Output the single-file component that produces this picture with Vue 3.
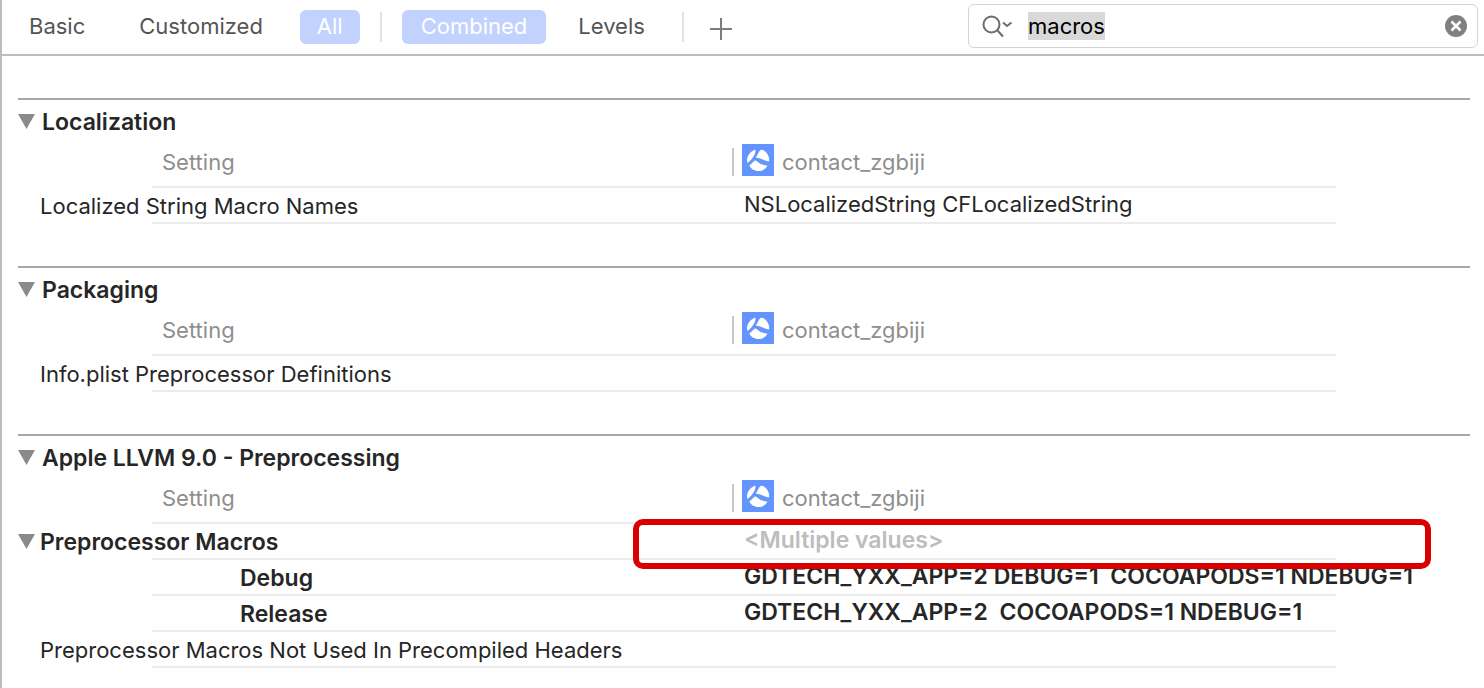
<script setup>
import { onMounted, ref } from 'vue'

const query = ref('macros')
const searchBox = ref(null)
const scope = ref('All')
const view = ref('Combined')

const sections = ref([
  {
    title: 'Localization',
    rows: [
      { label: 'Localized String Macro Names', value: 'NSLocalizedString CFLocalizedString' },
    ],
  },
  {
    title: 'Packaging',
    rows: [{ label: 'Info.plist Preprocessor Definitions', value: '' }],
  },
  {
    title: 'Apple LLVM 9.0 - Preprocessing',
    rows: [
      { label: 'Preprocessor Macros', value: '<Multiple values>', kind: 'group' },
      { label: 'Debug', value: 'GDTECH_YXX_APP=2 DEBUG=1  COCOAPODS=1 NDEBUG=1', kind: 'child' },
      { label: 'Release', value: 'GDTECH_YXX_APP=2  COCOAPODS=1 NDEBUG=1', kind: 'child' },
      { label: 'Preprocessor Macros Not Used In Precompiled Headers', value: '' },
    ],
  },
])

onMounted(() => {
  searchBox.value.focus()
  searchBox.value.select()
})
</script>

<template>
  <div class="settings">
    <header class="toolbar">
      <nav class="filters">
        <button
          v-for="name in ['Basic', 'Customized', 'All']"
          :key="name"
          type="button"
          class="filter"
          :class="{ active: scope === name }"
          @click="scope = name"
        >{{ name }}</button>
      </nav>
      <span class="divider"></span>
      <nav class="filters views">
        <button
          v-for="name in ['Combined', 'Levels']"
          :key="name"
          type="button"
          class="filter"
          :class="{ active: view === name }"
          @click="view = name"
        >{{ name }}</button>
      </nav>
      <span class="divider last"></span>
      <button type="button" class="add" aria-label="Add setting">
        <svg width="22" height="22" viewBox="0 0 22 22">
          <path d="M11 0V22M0 11H22" stroke="#7d7d7d" stroke-width="2" fill="none" />
        </svg>
      </button>
      <div class="search">
        <svg width="32" height="24" viewBox="0 0 32 24" aria-hidden="true">
          <g fill="none" stroke="#6c6c6c" stroke-width="2">
            <circle cx="9.500" cy="10.500" r="8" />
            <path d="M15 16L21 22.500" />
            <path d="M21 8.500L25 12L29.500 8.500" />
          </g>
        </svg>
        <input ref="searchBox" v-model="query" type="text" aria-label="Search settings" spellcheck="false" />
        <button type="button" class="clear" aria-label="Clear search" @click="query = ''">
          <svg width="22" height="22" viewBox="0 0 22 22">
            <circle cx="11" cy="11" r="11" fill="#808080" />
            <path d="M6.500 6.500L15.500 15.500M15.500 6.500L6.500 15.500" stroke="#fff" stroke-width="2.600" />
          </svg>
        </button>
      </div>
    </header>

    <main class="content">
      <section v-for="section in sections" :key="section.title" class="section">
        <h2 class="title">
          <button type="button" class="disclosure" :aria-label="'Toggle ' + section.title">
            <svg width="18" height="17" viewBox="0 0 18 17"><path d="M0 0H17L8.500 15Z" fill="#8a8a8a" /></svg>
          </button>
          {{ section.title }}
        </h2>
        <table>
          <thead>
            <tr>
              <th class="name" scope="col">Setting</th>
              <th class="target" scope="col">
                <div class="target-inner">
                  <span class="tick"></span>
                  <svg width="32" height="32" viewBox="0 0 32 32" aria-hidden="true">
                    <rect width="32" height="32" fill="#6495ff" />
                    <path d="M13.6 5.4C8.6 7 5 11.400 5 16.400C5 17.300 5.100 18 5.600 18.400C6 18.700 6.600 18.100 7.300 17.400C10.800 14 13.500 10.500 13.600 5.400Z" fill="#fff" />
                    <path d="M19 5.800C20 5.300 21.500 6 23 7.300C26 9.800 27.400 13.500 27.200 16.800C27 17.900 26 17.600 24.800 17.100C21 15.500 18 14.200 13.800 13.500C15.600 11.500 16.500 7.300 19 5.800Z" fill="#fff" />
                    <path d="M7.300 21.200C9.500 20.200 10.800 18 12.800 16.600C14 16 14.800 17 15.800 18C18.500 20.400 21.700 21.200 25.400 21.500C24.300 24.600 20.500 27 16.400 27C12.400 27 8.400 24.600 7.300 21.200Z" fill="#fff" />
                  </svg>
                  <span>contact_zgbiji</span>
                </div>
              </th>
            </tr>
          </thead>
          <tbody>
            <tr v-for="row in section.rows" :key="row.label" :class="row.kind">
              <th class="label" scope="row">
                <button v-if="row.kind === 'group'" type="button" class="disclosure" :aria-label="'Toggle ' + row.label">
                  <svg width="18" height="17" viewBox="0 0 18 17"><path d="M0 0H17L8.500 15Z" fill="#8a8a8a" /></svg>
                </button>
                <span>{{ row.label }}</span>
              </th>
              <td class="value">
                {{ row.value }}
                <span v-if="row.kind === 'group'" class="highlight"></span>
              </td>
            </tr>
          </tbody>
        </table>
      </section>
    </main>
  </div>
</template>

<style>
body {
  background: #fff;
  overflow: hidden;
}
</style>

<style scoped>
.settings {
  box-sizing: border-box;
  min-height: 100vh;
  border-left: 2px solid #bcbcbc;
  background: #fff;
  color: #262626;
  font: 22px/36px Inter, "Liberation Sans", sans-serif;
}
button {
  border: 0;
  padding: 0;
  background: none;
  font: inherit;
  color: inherit;
}
svg {
  display: block;
  flex: none;
}
.toolbar {
  display: flex;
  align-items: center;
  height: 54px;
  padding: 0 6px 0 10px;
  border-bottom: 2px solid #bcbcbc;
}
.filters {
  display: flex;
  gap: 20px;
}
.filter {
  height: 34px;
  padding: 0 17px 2px;
  border-radius: 6px;
  line-height: 32px;
  color: #555;
}
.views {
  gap: 13px;
}
.views .filter {
  padding: 0 19px 2px;
}
.filter.active {
  background: #c1d2ff;
  color: #fff;
}
.divider {
  width: 2px;
  height: 30px;
  margin: 0 20px;
  background: #e2e2e2;
}
.divider.last {
  margin-left: 18px;
}
.add {
  margin: 4px 0 0 6px;
}
.search {
  box-sizing: border-box;
  display: flex;
  align-items: center;
  width: 510px;
  height: 44px;
  margin-left: auto;
  margin-bottom: 2px;
  padding: 0 10px 0 13px;
  border: 1px solid #d4d4d4;
  border-radius: 6px;
}
.search input {
  flex: 1;
  min-width: 0;
  margin-left: 14px;
  padding: 0;
  border: 0;
  outline: 0;
  background: none;
  font: inherit;
  line-height: 28px;
  color: #000;
}
.search input::selection {
  background: #d9d9d9;
  color: #000;
}
.content {
  padding: 42px 14px 0 16px;
}
.section {
  margin-bottom: 42px;
  border-top: 2px solid #a8a8a8;
}
.title {
  display: flex;
  align-items: center;
  gap: 6px;
  margin: 0;
  font-size: 23px;
  font-weight: 600;
  line-height: 44px;
}
table {
  width: calc(100% - 134px);
  table-layout: fixed;
  border-spacing: 0;
}
tr {
  background: linear-gradient(#ececec, #ececec) 134px bottom / calc(100% - 134px) 2px no-repeat;
}
th,
td {
  height: 36px;
  padding: 0;
  text-align: left;
  vertical-align: top;
  font-weight: 400;
  white-space: pre;
}
thead th {
  height: 44px;
  color: #8e8e8e;
}
.name {
  width: 570px;
  padding-left: 144px;
}
.target-inner {
  display: flex;
}
.tick {
  width: 2px;
  height: 28px;
  margin: 4px 8px 0 0;
  background: #c8c8c8;
}
.target-inner svg {
  margin-right: 8px;
}
.label {
  padding-left: 22px;
}
.value {
  position: relative;
  padding-left: 12px;
  line-height: 32px;
  white-space: pre;
}
.group .label {
  display: flex;
  align-items: center;
  gap: 4px;
  padding-left: 0;
}
.group .label,
.group .value,
.child .label,
.child .value {
  font-size: 23px;
  font-weight: 600;
}
.group .value {
  color: #bdbdbd;
}
.child .label {
  padding-left: 222px;
}
.highlight {
  position: absolute;
  z-index: 1;
  inset: -5px -95px -9px -99px;
  border: 6px solid #db0000;
  border-radius: 10px;
  pointer-events: none;
}
</style>
